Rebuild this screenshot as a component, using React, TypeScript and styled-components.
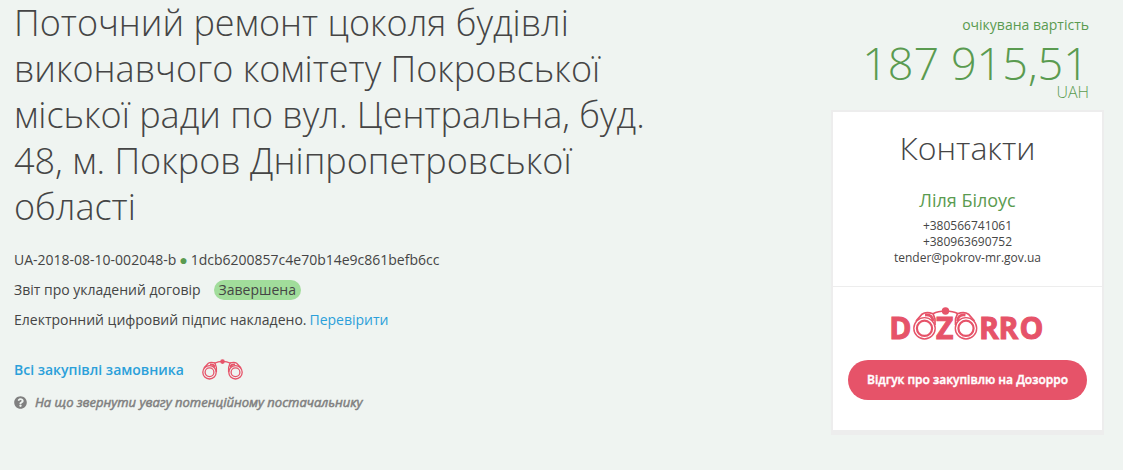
import React from 'react';
import styled, { createGlobalStyle } from 'styled-components';
import { FaQuestionCircle } from 'react-icons/fa';

const GlobalStyle = createGlobalStyle`
  *, *::before, *::after { box-sizing: border-box; }
  body {
    margin: 0;
    background: #eff4f1;
    color: #454545;
    font-family: 'Open Sans', 'Noto Sans', sans-serif;
    font-size: 14px;
    line-height: 20px;
  }
  a { color: #2ba0da; text-decoration: none; }
  a:hover { text-decoration: underline; }
`;

const Page = styled.div`
  display: flex;
  align-items: flex-start;
  padding: 0 19px 35px 14px;
`;

const Summary = styled.main`
  flex: 1;
  min-width: 0;
  padding-right: 140px;
`;

const Title = styled.h1`
  margin: 0 0 20px;
  font-size: 36px;
  font-weight: 300;
  line-height: 46px;
`;

const InfoLine = styled.p`
  display: flex;
  gap: 3px;
  margin: 0 0 10px;
`;

const Dot = styled.span`
  color: #5a9b50;
`;

const Status = styled.span`
  margin-left: 10px;
  padding: 0 5px;
  border-radius: 10px;
  background: #a1dd9b;
`;

const CustomerLine = styled.div`
  display: flex;
  align-items: center;
  gap: 18px;
  margin-top: 29px;
  font-weight: 600;
`;

const Hint = styled.div`
  display: flex;
  align-items: center;
  gap: 8px;
  margin-top: 12px;
  color: #808080;
  font-size: 13px;
  font-style: italic;
`;

const HintText = styled.span`
  -webkit-text-stroke: 0.5px #808080;
`;

const Sidebar = styled.aside`
  flex: 0 0 273px;
`;

const Price = styled.div`
  display: flex;
  flex-direction: column;
  align-items: flex-end;
  padding: 15px 15px 9px 0;
  color: #5a9b50;
`;

const Amount = styled.strong`
  font-size: 45px;
  font-weight: 300;
  line-height: 56px;
  white-space: nowrap;
`;

const Currency = styled.span`
  margin-top: -8px;
  font-size: 16px;
  font-weight: 300;
  line-height: 18px;
`;

const Card = styled.section`
  border: 2px solid #ededed;
  border-bottom-width: 5px;
  background: #fff;
  text-align: center;
`;

const Contacts = styled.div`
  padding: 14px 13px 20px;
  border-bottom: 1px solid #ededed;
`;

const CardTitle = styled.h2`
  margin: 0 0 18px;
  font-size: 32px;
  font-weight: 300;
  line-height: 44px;
`;

const Person = styled.h3`
  margin: 0 0 6px;
  color: #5a9b50;
  font-size: 18px;
  font-weight: 400;
  line-height: 24px;
`;

const ContactText = styled.div`
  font-size: 12px;
  line-height: 16px;
`;

const Review = styled.div`
  display: flex;
  flex-direction: column;
  align-items: center;
  gap: 11px;
  padding: 18px 15px 30px;
`;

const ReviewButton = styled.button`
  width: 100%;
  height: 40px;
  border: 0;
  border-radius: 20px;
  background: #e65369;
  color: #fff;
  font: 600 12px/16px 'Open Sans', 'Noto Sans', sans-serif;
  -webkit-text-stroke: 0.4px #fff;
  cursor: pointer;
`;

const Binoculars = () => (
  <svg width="41" height="21" viewBox="0 0 41 21" fill="none" stroke="#e65369" aria-hidden="true">
    <circle cx="7.5" cy="13.3" r="6.7" strokeWidth="1.3" />
    <circle cx="7.5" cy="13.3" r="4.4" strokeWidth="1.3" />
    <circle cx="33.5" cy="13.3" r="6.7" strokeWidth="1.3" />
    <circle cx="33.5" cy="13.3" r="4.4" strokeWidth="1.3" />
    <path d="M2 9 6.3 4.3Q8.5 2.8 13 4L14.4 8.5V13M39 9 34.7 4.3Q32.5 2.8 28 4L26.6 8.5V13" strokeWidth="1.3" />
    <path d="M8 5.5Q12 5 12.5 8M33 5.5Q29 5 28.5 8" strokeWidth="1.8" />
    <path d="M12.5 4.2Q16 2.3 20.5 2.3T28.5 4.2" strokeWidth="1.3" />
    <circle cx="20.5" cy="2.6" r="2.3" fill="#e65369" stroke="none" />
  </svg>
);

const LogoText = styled.text`
  fill: #e65369;
  stroke: #e65369;
  stroke-width: 1px;
  font-family: 'Open Sans', sans-serif;
  font-size: 30px;
  font-weight: 700;
`;

const DozorroLogo = () => (
  <svg width="157" height="44" viewBox="-2 0 157 44" fill="none" stroke="#e65369" role="img" aria-label="Dozorro">
    <LogoText y="33.5" x="-1.7 45 88 107.5 128.5">DZRRO</LogoText>
    <circle cx="33.5" cy="23.3" r="10.7" strokeWidth="1.4" />
    <circle cx="33.5" cy="23.3" r="7.6" strokeWidth="2.2" />
    <circle cx="75" cy="23.3" r="10.7" strokeWidth="1.4" />
    <circle cx="75" cy="23.3" r="7.6" strokeWidth="2.2" />
    <path d="M25 16 31 9.2Q35 6.2 42 8.7L44 14V20M83.5 16 77.5 9.2Q73.5 6.2 66.5 8.7L64.5 14V20" strokeWidth="1.7" />
    <path d="M34 10Q41 9 42 16M74.5 10Q67.5 9 66.5 16" strokeWidth="2.8" />
    <path d="M42 8.7Q47 6 54.5 6T67 8.7" strokeWidth="1.6" />
    <circle cx="54.5" cy="6" r="3.7" fill="#e65369" stroke="none" />
  </svg>
);

export default function App() {
  return (
    <>
      <GlobalStyle />
      <Page>
        <Summary>
          <Title>
            Поточний ремонт цоколя будівлі виконавчого комітету Покровської міської ради по вул.
            Центральна, буд. 48, м. Покров Дніпропетровської області
          </Title>
          <InfoLine>
            <span>UA-2018-08-10-002048-b</span>
            <Dot>●</Dot>
            <span>1dcb6200857c4e70b14e9c861befb6cc</span>
          </InfoLine>
          <InfoLine>
            <span>Звіт про укладений договір</span>
            <Status>Завершена</Status>
          </InfoLine>
          <InfoLine>
            <span>Електронний цифровий підпис накладено.</span>
            <a href="#signature">Перевірити</a>
          </InfoLine>
          <CustomerLine>
            <a href="#customer">Всі закупівлі замовника</a>
            <Binoculars />
          </CustomerLine>
          <Hint>
            <FaQuestionCircle size={13} />
            <HintText>На що звернути увагу потенційному постачальнику</HintText>
          </Hint>
        </Summary>
        <Sidebar>
          <Price>
            <span>очікувана вартість</span>
            <Amount>187 915,51</Amount>
            <Currency>UAH</Currency>
          </Price>
          <Card>
            <Contacts>
              <CardTitle>Контакти</CardTitle>
              <Person>Ліля Білоус</Person>
              <ContactText>+380566741061</ContactText>
              <ContactText>+380963690752</ContactText>
              <ContactText>tender@pokrov-mr.gov.ua</ContactText>
            </Contacts>
            <Review>
              <DozorroLogo />
              <ReviewButton type="button">Відгук про закупівлю на Дозорро</ReviewButton>
            </Review>
          </Card>
        </Sidebar>
      </Page>
    </>
  );
}
